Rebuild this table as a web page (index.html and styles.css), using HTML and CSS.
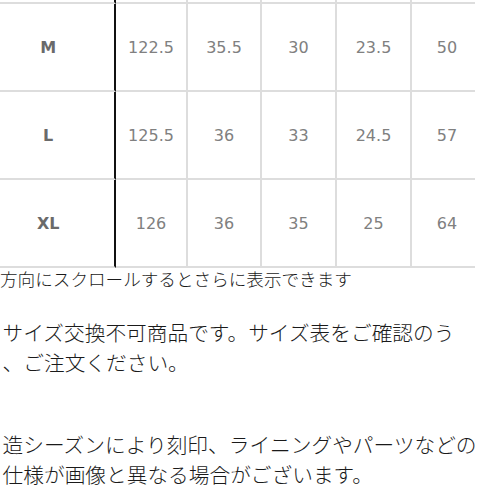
FILE: index.html
```html
<!DOCTYPE html>
<html lang="ja">
<head>
<meta charset="utf-8">
<title>サイズ表</title>
<link rel="stylesheet" href="styles.css">
</head>
<body>
<div class="page">
  <div class="table-wrap">
    <div class="row head">
      <div class="cell size"></div>
      <div class="cell"></div>
      <div class="cell"></div>
      <div class="cell"></div>
      <div class="cell"></div>
      <div class="cell"></div>
    </div>
    <div class="row">
      <div class="cell size">M</div>
      <div class="cell">122.5</div>
      <div class="cell">35.5</div>
      <div class="cell">30</div>
      <div class="cell">23.5</div>
      <div class="cell">50</div>
    </div>
    <div class="row">
      <div class="cell size">L</div>
      <div class="cell">125.5</div>
      <div class="cell">36</div>
      <div class="cell">33</div>
      <div class="cell">24.5</div>
      <div class="cell">57</div>
    </div>
    <div class="row">
      <div class="cell size">XL</div>
      <div class="cell">126</div>
      <div class="cell">36</div>
      <div class="cell">35</div>
      <div class="cell">25</div>
      <div class="cell">64</div>
    </div>
  </div>
  <p class="note">方向にスクロールするとさらに表示できます</p>
  <p class="para">サイズ交換不可商品です。サイズ表をご確認のう<br>、ご注文ください。</p>
  <p class="para second">造シーズンにより刻印、ライニングやパーツなどの仕様が画像と異なる場合がございます。</p>
</div>
</body>
</html>
```

FILE: styles.css
```css
html, body {
  margin: 0;
  padding: 0;
  background: #ffffff;
}

body {
  font-family: "Noto Sans CJK JP", "Noto Sans", sans-serif;
  font-weight: 300;
  color: #1a1a1a;
  overflow: hidden;
}

.page {
  width: 498px;
}

.table-wrap {
  width: 492.6px;
  overflow: hidden;
  margin-top: -40px;
  margin-left: -17.6px;
}

.row {
  display: grid;
  grid-template-columns: 133.6px 72px 74px 75px 75px 72px;
  height: 88px;
}

.row.head {
  height: 44px;
}

.cell {
  box-sizing: border-box;
  border-right: 2px solid #dddddd;
  border-bottom: 2px solid #dddddd;
  display: flex;
  align-items: center;
  justify-content: center;
  font-family: "DejaVu Sans", sans-serif;
  font-weight: normal;
  font-size: 16px;
  color: #808080;
}

.cell.size {
  border-right-color: #111111;
  font-weight: bold;
  color: #6a6a6a;
}

.note {
  margin: 0;
  font-size: 17.6px;
  line-height: 22px;
}

.para {
  margin: 27.3px 0 0 2.6px;
  width: 482px;
  font-size: 20.7px;
  line-height: 30px;
}

.para.second {
  margin-top: 51.7px;
}
```
